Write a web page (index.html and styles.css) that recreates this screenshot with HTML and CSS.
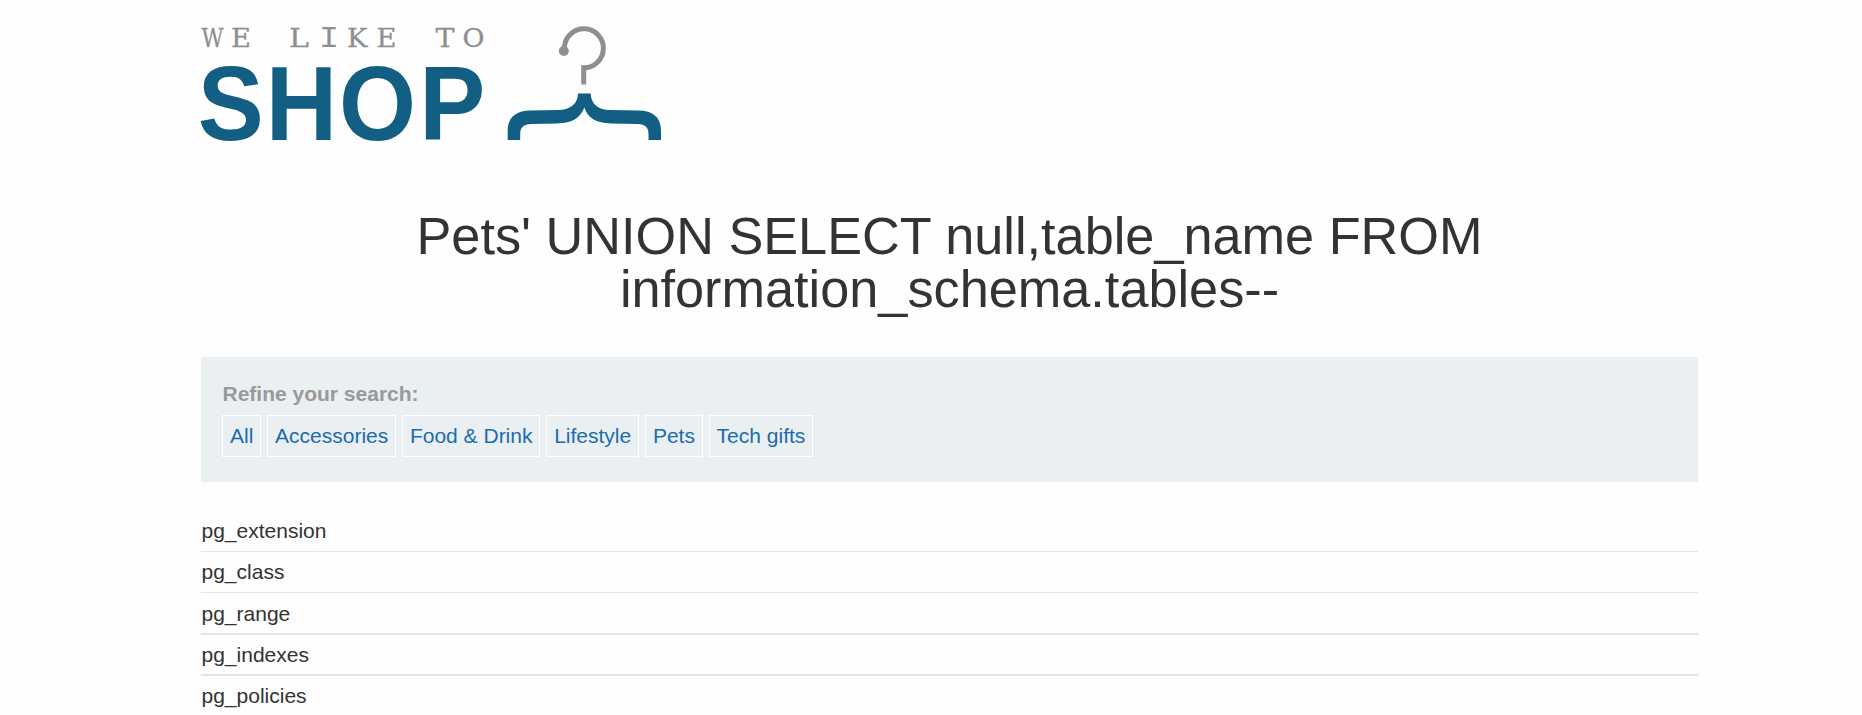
FILE: index.html
```
<!DOCTYPE html>
<html lang="en">
<head>
<meta charset="utf-8">
<title>We Like To Shop</title>
<link rel="stylesheet" href="styles.css">
</head>
<body>
<main class="container">
  <header class="logo">
    <svg class="logo-art" width="480" height="150" viewBox="190 10 480 150" role="img" aria-label="We like to shop">
      <g class="tagline">
        <text x="201.5" y="47" textLength="22" lengthAdjust="spacingAndGlyphs">W</text>
        <text x="231" y="47" textLength="20" lengthAdjust="spacingAndGlyphs">E</text>
        <text x="289" y="47" textLength="20" lengthAdjust="spacingAndGlyphs">L</text>
        <text class="mono" x="319" y="47" textLength="20" lengthAdjust="spacingAndGlyphs">I</text>
        <text x="347" y="47" textLength="20.500" lengthAdjust="spacingAndGlyphs">K</text>
        <text x="376.500" y="47" textLength="20" lengthAdjust="spacingAndGlyphs">E</text>
        <text x="435.500" y="47" textLength="19" lengthAdjust="spacingAndGlyphs">T</text>
        <text x="462.500" y="47" textLength="22" lengthAdjust="spacingAndGlyphs">O</text>
      </g>
      <text class="wordmark" transform="translate(197.800 140) scale(1 1.065)" x="0 68 141.300 221.500" y="0">SHOP</text>
      <path class="hook" d="M564.500 50 V46 A19.500 19.500 0 1 1 583.700 67.800 V84.500"/>
      <circle class="hook-tip" cx="563.800" cy="51" r="5"/>
      <path class="hanger" d="M578 93.500 H590.700 C591 103 597 110 610 110 L639 110.500 C652 110.500 661 117 661 130 V140 H648.500 V134 C648.500 127 645 124.500 638 124 L611 123.500 C596 123 587.500 118 584.400 107.500 C580 118 573 123 557 123.500 L531 124 C524 124.500 520.200 127 520.200 134 V140 H507.700 V130 C507.700 117 517 110.500 530 110.500 L558 110 C571 110 578 103 578 93.500 Z"/>
    </svg>
  </header>
  <h1 class="title">Pets' UNION SELECT null,table_name FROM information_schema.tables--</h1>
  <section class="filters">
    <div class="filters-label">Refine your search:</div>
    <nav class="filters-list">
      <a class="filter">All</a>
      <a class="filter">Accessories</a>
      <a class="filter">Food &amp; Drink</a>
      <a class="filter">Lifestyle</a>
      <a class="filter">Pets</a>
      <a class="filter">Tech gifts</a>
    </nav>
  </section>
  <div class="results">
    <div class="row">pg_extension</div>
    <div class="row">pg_class</div>
    <div class="row row-tall">pg_range</div>
    <div class="row row-thick">pg_indexes</div>
    <div class="row">pg_policies</div>
  </div>
</main>
</body>
</html>
```
FILE: styles.css
```
* { box-sizing: border-box; }
body {
  margin: 0;
  height: 715px;
  overflow: hidden;
  background: #fefefe;
  color: #333332;
  font-family: "Liberation Sans", Arial, sans-serif;
  font-size: 21px;
}
.container { width: 1497px; margin-left: 201px; padding-top: 10px; }
.logo { height: 150px; margin-left: -11px; }
.logo-art { display: block; overflow: visible; }
.tagline { font-family: "DejaVu Serif", serif; font-size: 26.500px; fill: #8f8f91; stroke: #8f8f91; stroke-width: 0.300px; }
.mono { font-family: "Liberation Mono", monospace; font-size: 29px; stroke: none; }
.wordmark { font-family: "Liberation Sans", Arial, sans-serif; font-size: 99px; font-weight: 700; fill: #125f83; }
.hook { fill: none; stroke: #8f8f91; stroke-width: 5; }
.hook-tip { fill: #8f8f91; }
.hanger { fill: #125f83; }
.title {
  margin: 50px 0 0;
  padding: 0 200px;
  height: 147px;
  font-size: 52.250px;
  font-weight: 400;
  line-height: 53px;
  text-align: center;
}
.filters { height: 125px; padding: 21px; background: #eaeff2; }
.filters-label { height: 37px; padding-left: 0.500px; line-height: 32px; font-weight: 700; color: #999; }
.filters-list { display: flex; gap: 5.700px; }
.filter {
  height: 42px;
  padding: 0 7px;
  border: 1px solid #fff;
  line-height: 40px;
  color: #1a6cb0;
  white-space: nowrap;
}
.results { margin-top: 29px; }
.row { height: 41px; line-height: 40px; border-bottom: 1px solid #e3e4e5; padding-left: 0.500px; }
.row-tall { height: 42px; border-bottom-width: 2px; line-height: 41px; }
.row-thick { border-bottom-width: 2px; }
```
